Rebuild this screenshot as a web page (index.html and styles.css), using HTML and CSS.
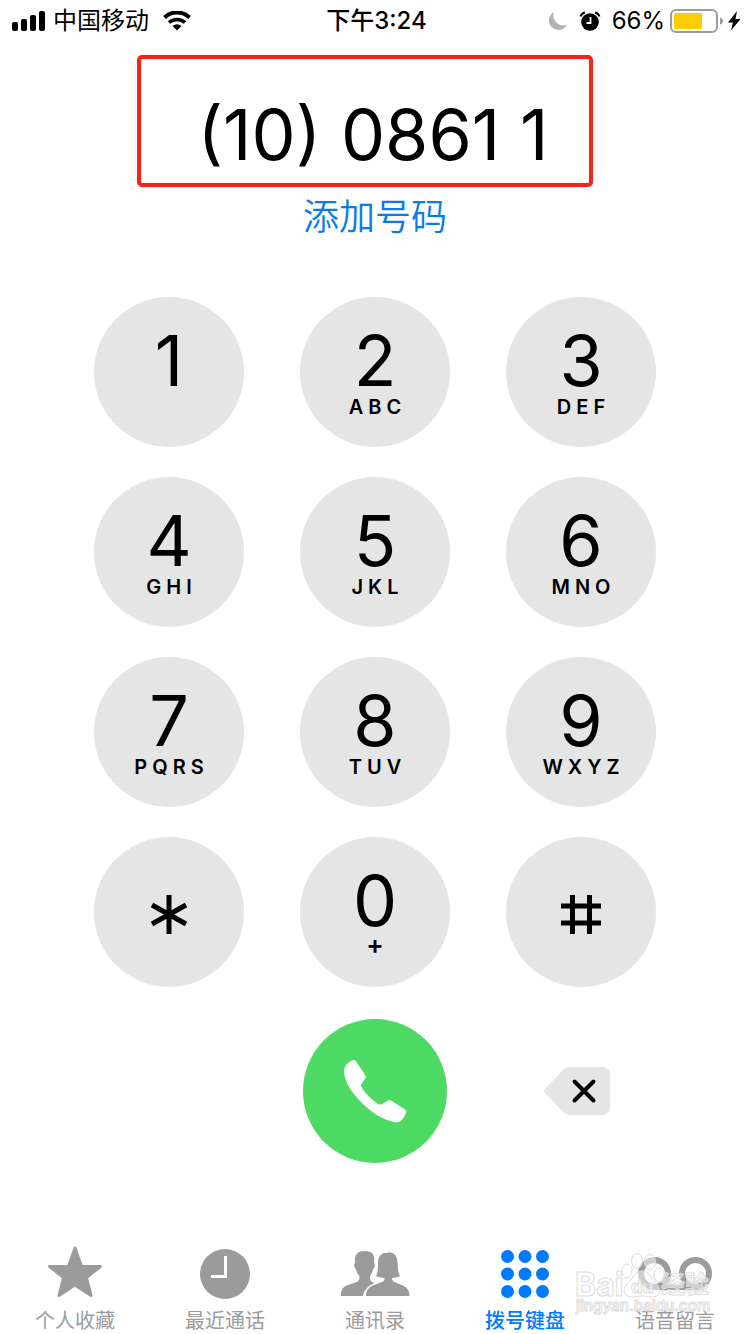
FILE: index.html
```html
<!DOCTYPE html>
<html lang="zh-CN">
<head>
    <meta charset="UTF-8">
    <meta name="viewport" content="width=device-width, initial-scale=1.0">
    <title>拨号键盘</title>
    <link rel="stylesheet" href="styles.css">
</head>
<body>

    <header class="status-bar">
        <div class="status-left">
            <svg width="34" height="20" viewBox="0 0 34 20">
                <rect x="0" y="11" width="6" height="9" rx="2"/>
                <rect x="9" y="8" width="6" height="12" rx="2"/>
                <rect x="18" y="4" width="6" height="16" rx="2"/>
                <rect x="27" y="0" width="6" height="20" rx="2"/>
            </svg>
            <span class="carrier">中国移动</span>
            <svg width="28" height="20" viewBox="0 0 28 20">
                <path d="M1.5 6.5a18 18 0 0 1 25 0" fill="none" stroke="#000" stroke-width="4"/>
                <path d="M6 11.5a12 12 0 0 1 16 0" fill="none" stroke="#000" stroke-width="3.6"/>
                <path d="M9.5 15a7 7 0 0 1 9 0L14 19.5z"/>
            </svg>
        </div>
        <time class="clock">下午3:24</time>
        <div class="status-right">
            <svg width="20" height="20" viewBox="0 0 20 20">
                <path d="M6 1A9.5 9.5 0 1 0 19 13.5 9.8 9.8 0 0 1 6 1z" fill="#b3b3b3"/>
            </svg>
            <svg class="alarm" width="22" height="20" viewBox="0 0 22 20">
                <circle cx="11" cy="11" r="8.8"/>
                <path d="M1.5 5.5A6 6 0 0 1 6 1.5M20.5 5.5A6 6 0 0 0 16 1.5" fill="none" stroke="#000" stroke-width="2"/>
                <path d="M11.5 6v6H7.5" fill="none" stroke="#fff" stroke-width="1.8"/>
            </svg>
            <span class="percent">66%</span>
            <svg width="54" height="24" viewBox="0 0 54 24">
                <rect x="1" y="1" width="46" height="22" rx="5" fill="#fff" stroke="#9c9c9c" stroke-width="2"/>
                <rect x="4" y="4" width="28" height="16" rx="1" fill="#ffcc00"/>
                <path d="M50 8.5q3 1 3 3.500t-3 3.500z" fill="#9c9c9c"/>
            </svg>
            <svg class="bolt" width="13" height="20" viewBox="0 0 13 20">
                <path d="M9 0L0 11.500h5L3 19.500 12.500 8H7.500z"/>
            </svg>
        </div>
    </header>

    <main>
        <section class="display">
            <output class="number">(10) 0861 1</output>
            <a class="add-number" href="#">添加号码</a>
        </section>

        <section class="keypad">
            <button class="key"><span class="digit">1</span></button>
            <button class="key"><span class="digit">2</span><span class="letters">ABC</span></button>
            <button class="key"><span class="digit">3</span><span class="letters">DEF</span></button>
            <button class="key"><span class="digit">4</span><span class="letters">GHI</span></button>
            <button class="key"><span class="digit">5</span><span class="letters">JKL</span></button>
            <button class="key"><span class="digit">6</span><span class="letters">MNO</span></button>
            <button class="key"><span class="digit">7</span><span class="letters">PQRS</span></button>
            <button class="key"><span class="digit">8</span><span class="letters">TUV</span></button>
            <button class="key"><span class="digit">9</span><span class="letters">WXYZ</span></button>
            <button class="key key-symbol" aria-label="*">
                <svg width="40" height="40" viewBox="0 0 40 40" stroke="#000" stroke-width="5">
                    <path d="M20 0v39M3 10l34 19M37 10l-34 19"/>
                </svg>
            </button>
            <button class="key"><span class="digit">0</span><span class="letters plus">+</span></button>
            <button class="key key-symbol" aria-label="#">
                <svg width="40" height="40" viewBox="0 0 40 40" stroke="#000" stroke-width="5">
                    <path d="M11.5 0v39M28.5 0v39M0 11h40M0 28h40"/>
                </svg>
            </button>
        </section>

        <section class="actions">
            <button class="call" aria-label="呼叫">
                <svg width="66" height="66" viewBox="0 0 66 66" fill="#fff">
                    <path d="M14.500 4Q13 1 10 2.500C5 5 2 8 2 14c1 11 8 21 17 30 10 10 20 17 33 20 5 1 8-1 10-5l2-4q1-2-1-3.500L50 43q-2-1-4-.5L40 46q-2 1-4 0C30 42 23 35 19.500 29q-1-2 0-3l4-6q1-1 0-2.500z"/>
                </svg>
            </button>
            <button class="delete" aria-label="删除">
                <svg width="66" height="48" viewBox="0 0 66 48">
                    <path d="M1 22L19 3q3-3 7-3h32q8 0 8 8v32q0 8-8 8H26q-4 0-7-3L1 26q-2-2 0-4z" fill="#e5e5e5"/>
                    <path d="M30.5 14.5l19 19M49.5 14.5l-19 19" stroke="#000" stroke-width="4" stroke-linecap="round"/>
                </svg>
            </button>
        </section>
    </main>

    <nav class="tab-bar">
        <a class="tab" href="#">
            <svg width="72" height="56" viewBox="0 0 72 56">
                <path d="M36 2l6.500 18.500H61.500L47.500 31.500 52 49.500 36 39 20 49.500l4.500-18L10.500 20.500h19z" fill="currentColor" stroke="currentColor" stroke-width="3" stroke-linejoin="round"/>
            </svg>
            <span>个人收藏</span>
        </a>
        <a class="tab" href="#">
            <svg width="72" height="56" viewBox="0 0 72 56">
                <circle cx="36" cy="28" r="25" fill="currentColor"/>
                <path d="M36.5 10v20.500H22" fill="none" stroke="#fff" stroke-width="3"/>
            </svg>
            <span>最近通话</span>
        </a>
        <a class="tab" href="#">
            <svg width="72" height="56" viewBox="0 0 72 56" fill="currentColor">
                <path d="M2 50C2 43 4 41 9 39l9-3c2-1 2.500-3 2.500-6-2-2-3-4-3.500-7-2-1-2.500-5-1-6-.5-7 1-12 9.500-12S36 9 35 17c1.500 1 1 5-1 6-.5 3-1.500 5-3 7 0 4 .5 5 2.500 6l2 1C29 40 25 44 24 50z"/>
                <path d="M27 50c0-6 3-9 8-11l8-3c2-1 2.500-2 2.500-4-3 0-6-1-8.500-2 3-5 1-11 2.500-17C41 8 44 6.500 48 7c7-2 10 3 10.500 9 .5 5 0 10 2.500 14-2.500 1-5 2-8 2 0 2 .5 3 2.500 4l7 3c5 2 8 5 8 11z"/>
            </svg>
            <span>通讯录</span>
        </a>
        <a class="tab active" href="#">
            <svg width="72" height="56" viewBox="0 0 72 56" fill="currentColor">
                <circle cx="18.5" cy="10.5" r="6.5"/>
                <circle cx="36" cy="10.5" r="6.5"/>
                <circle cx="53.5" cy="10.5" r="6.5"/>
                <circle cx="18.5" cy="28" r="6.5"/>
                <circle cx="36" cy="28" r="6.5"/>
                <circle cx="53.5" cy="28" r="6.5"/>
                <circle cx="18.5" cy="45.5" r="6.5"/>
                <circle cx="36" cy="45.5" r="6.5"/>
                <circle cx="53.5" cy="45.5" r="6.5"/>
            </svg>
            <span>拨号键盘</span>
        </a>
        <a class="tab" href="#">
            <svg width="76" height="56" viewBox="-2 0 76 56" fill="none" stroke="currentColor">
                <circle cx="15.5" cy="27.5" r="13.5" stroke-width="6"/>
                <circle cx="56.5" cy="27.5" r="13.5" stroke-width="6"/>
                <path d="M15.5 41.5h41" stroke-width="5"/>
            </svg>
            <span>语音留言</span>
        </a>

        <!-- watermark over the last tab -->
        <svg class="watermark" width="140" height="72" viewBox="0 0 140 72">
            <g fill="#fff" fill-opacity=".5" stroke="#dcdcdc" stroke-width="1">
                <text class="wm-logo" x="0" y="46">Bai</text>
                <ellipse cx="52" cy="21" rx="5" ry="7"/>
                <ellipse cx="62" cy="11" rx="5.5" ry="7.5"/>
                <ellipse cx="75" cy="12" rx="5.5" ry="7.5"/>
                <ellipse cx="84" cy="25" rx="5" ry="7"/>
                <path d="M67 21c7 0 9 7 13 11s7 8 3 13c-4 4-10 1-16 1s-12 3-16-1c-4-5-1-9 3-13s6-11 13-11z"/>
                <text class="wm-du" x="56" y="43">du</text>
                <text class="wm-name" x="86" y="43">经验</text>
            </g>
            <text class="wm-url" x="1" y="61">jingyan.baidu.com</text>
        </svg>
    </nav>

</body>
</html>
```
FILE: styles.css
```css
* {
    margin: 0;
    padding: 0;
    box-sizing: border-box;
}

body {
    display: flex;
    flex-direction: column;
    min-height: 100vh;
    background: #fff;
    color: #000;
    font-family: Inter, "Noto Sans CJK SC", sans-serif;
}

button {
    border: none;
    background: none;
    color: inherit;
    font-family: inherit;
    cursor: pointer;
}

a {
    text-decoration: none;
}

/* status bar */
.status-bar {
    display: grid;
    grid-template-columns: 1fr auto 1fr;
    align-items: center;
    height: 40px;
    padding: 0 9px 0 12px;
    font-size: 24px;
    line-height: 40px;
}

.status-bar span, .status-bar time {
    padding-top: 1px;
}

.status-left, .status-right {
    display: flex;
    align-items: center;
}

.status-right {
    justify-content: flex-end;
}

.carrier {
    margin: 0 14px 0 7px;
}

.clock {
    font-weight: 500;
}

.alarm {
    margin: 0 11px;
}

.percent {
    margin-right: 5px;
}

.bolt {
    margin-left: 4px;
}

/* dialled number */
.display {
    display: flex;
    flex-direction: column;
    align-items: center;
    padding-top: 15px;
}

.number {
    width: 456px;
    margin-right: 20px;
    padding: 41px 0 13px 16px;
    border: 4px solid #ff2116;
    border-radius: 5px;
    font-size: 70px;
    line-height: 70px;
    text-align: center;
    white-space: nowrap;
}

.add-number {
    margin-top: 8px;
    color: #0b7bea;
    font-size: 36px;
    font-weight: 350;
    line-height: 44px;
}

/* keypad */
.keypad, .actions {
    display: grid;
    grid-template-columns: repeat(3, 150px);
    gap: 30px 56px;
    justify-content: center;
}

.keypad {
    margin-top: 58px;
}

.key {
    display: flex;
    flex-direction: column;
    align-items: center;
    height: 150px;
    padding-top: 29px;
    border-radius: 50%;
    background: #e5e5e5;
}

.key-symbol {
    justify-content: center;
    padding-top: 6px;
}

.digit {
    font-size: 70px;
    line-height: 70px;
}

.letters {
    margin-top: 1px;
    padding-left: 5px;
    font-size: 20px;
    font-weight: 600;
    line-height: 20px;
    letter-spacing: 5px;
}

.plus {
    font-size: 26px;
    line-height: 16px;
}

.actions {
    align-items: center;
    margin: 32px 0;
}

.call {
    display: flex;
    align-items: center;
    justify-content: center;
    grid-column: 2;
    justify-self: center;
    width: 144px;
    height: 144px;
    border-radius: 50%;
    background: #4cd964;
}

.delete {
    display: flex;
    justify-content: center;
    padding-right: 8px;
}

/* tab bar */
.tab-bar {
    position: relative;
    display: grid;
    grid-template-columns: repeat(5, 1fr);
    margin-top: auto;
    padding-bottom: 1px;
}

.tab {
    display: flex;
    flex-direction: column;
    align-items: center;
    gap: 7px;
    color: #9b9b9b;
    font-size: 20px;
    line-height: 24px;
}

.active {
    color: #007aff;
    font-weight: 500;
}

.watermark {
    position: absolute;
    right: 35px;
    top: 4px;
    pointer-events: none;
}

.wm-logo {
    font-size: 32px;
    font-weight: 700;
}

.wm-du {
    font-size: 18px;
    font-weight: 700;
}

.wm-name {
    font-size: 24px;
    font-weight: 700;
}

.wm-url {
    fill: #fff;
    fill-opacity: .5;
    stroke: #dcdcdc;
    stroke-width: 1px;
    font-size: 15px;
    font-weight: 600;
}
```
